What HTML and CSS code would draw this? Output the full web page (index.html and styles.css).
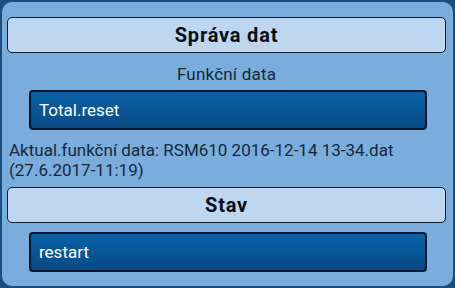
FILE: index.html
```html
<!DOCTYPE html>
<html lang="cs">
<head>
<meta charset="utf-8">
<link rel="stylesheet" href="styles.css">
</head>
<body>
<div class="panel">
  <div class="section-head">Správa dat</div>
  <div class="label">Funkční data</div>
  <div class="btn">Total.reset</div>
  <div class="info">Aktual.funkční data: RSM610 2016-12-14 13-34.dat<br>(27.6.2017-11:19)</div>
  <div class="section-head">Stav</div>
  <div class="btn btn-last">restart</div>
</div>
</body>
</html>
```
FILE: styles.css
```css
html, body {
  margin: 0;
  padding: 0;
}
body {
  width: 455px;
  height: 288px;
  background: #1d4e7b;
  font-family: Roboto, "Noto Sans", sans-serif;
  overflow: hidden;
}
.panel {
  margin: 2px;
  height: 284px;
  box-sizing: border-box;
  background: #79addb;
  border-radius: 10px;
  padding: 15px 7px 0 5px;
  display: flex;
  flex-direction: column;
}
.section-head {
  height: 36px;
  box-sizing: border-box;
  border: 1px solid #0e1e2e;
  border-radius: 5px;
  background: #bed7ef;
  color: #0b0f14;
  font-weight: bold;
  font-size: 20px;
  letter-spacing: 0.8px;
  display: flex;
  align-items: center;
  justify-content: center;
}
.label {
  text-align: center;
  font-size: 17px;
  letter-spacing: 0.2px;
  line-height: 20px;
  color: #18283a;
  margin-top: 11px;
}
.btn {
  margin: 6px 19px 0 22px;
  height: 40px;
  box-sizing: border-box;
  border: 2px solid #0a1625;
  border-radius: 4px;
  background: linear-gradient(#0a61a7, #074a86);
  color: #ffffff;
  font-size: 17px;
  display: flex;
  align-items: center;
  padding-left: 8px;
}
.info {
  margin-top: 10px;
  margin-left: 2px;
  font-size: 17px;
  line-height: 20px;
  color: #18283a;
}
.info + .section-head {
  margin-top: 7px;
}
.btn-last {
  margin-top: 9px;
}
```
